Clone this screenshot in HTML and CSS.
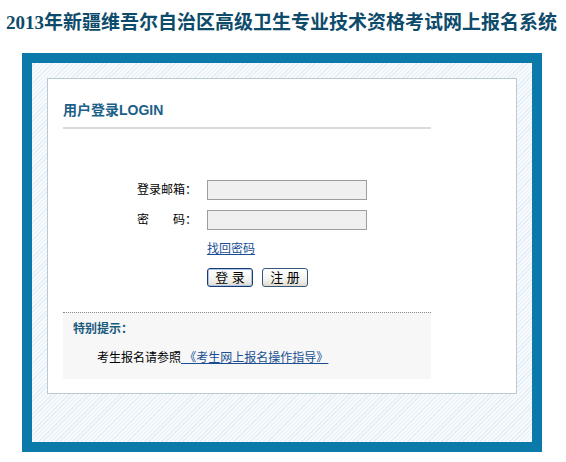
FILE: index.html
```html
<!DOCTYPE html>
<html lang="zh-CN">
  <head>
    <meta charset="utf-8">
    <title>2013年新疆维吾尔自治区高级卫生专业技术资格考试网上报名系统</title>
    <link rel="stylesheet" href="styles.css">
  </head>
  <body>
    <h1 class="site-title">2013年新疆维吾尔自治区高级卫生专业技术资格考试网上报名系统</h1>
    <div class="frame">
      <div class="panel">
        <h2 class="panel-title">用户登录LOGIN</h2>
        <form class="login-form" action="#">
          <label class="field-label" for="email">登录邮箱：</label>
          <input class="field-input" id="email" type="text">
          <label class="field-label" for="pwd"><span class="spread">密</span>码：</label>
          <input class="field-input" id="pwd" type="password">
          <div class="field-extra"><a href="#">找回密码</a></div>
          <div class="field-buttons">
            <button type="button" class="btn btn-default">登 录</button>
            <button type="button" class="btn">注 册</button>
          </div>
        </form>
        <div class="notice">
          <h3 class="notice-title">特别提示：</h3>
          <p class="notice-text">考生报名请参照<a href="#">&nbsp;《考生网上报名操作指导》</a></p>
        </div>
      </div>
    </div>
  </body>
</html>
```

FILE: styles.css
```css
body {
  margin: 0;
  font-family: 'Liberation Sans', 'Noto Sans CJK SC', sans-serif;
  font-size: 12px;
  color: #000;
  background-color: #fff;
}

a {
  color: #1a4f93;
  text-decoration: underline;
}

.site-title {
  margin: 0;
  padding: 11px 0 0 6px;
  height: 42px;
  font-family: 'Liberation Serif', 'Noto Sans CJK SC', serif;
  font-size: 19px;
  line-height: 24px;
  font-weight: bold;
  color: #0e4b6b;
  white-space: nowrap;
}

/* blue outer frame with the striped background */
.frame {
  margin-left: 22px;
  width: 470px;
  padding: 15px 15px 48px 15px;
  border: 10px solid #0b7aab;
  background-color: #f7fafd;
  background-image: repeating-linear-gradient(135deg, #f7fafd 0, #f7fafd 2px, #e5eef6 2px, #e5eef6 3px);
}

.panel {
  background-color: #fff;
  border: 1px solid #b7cad6;
  padding: 0 15px 14px 15px;
}

.panel-title {
  width: 368px;
  margin: 0;
  padding: 21px 0 7px 0;
  font-size: 14px;
  line-height: 20px;
  font-weight: bold;
  color: #1b6088;
  border-bottom: 2px solid #dadada;
}

.login-form {
  display: grid;
  grid-template-columns: 60px 160px;
  grid-template-rows: 20px 20px 18px 19px;
  column-gap: 10px;
  row-gap: 10px;
  margin: 51px 0 0 74px;
}

.field-label {
  text-align: right;
  line-height: 20px;
  color: #000;
  white-space: nowrap;
}

.spread {
  display: inline-block;
  width: 36px;
  text-align: left;
}

.field-input {
  box-sizing: border-box;
  width: 160px;
  height: 20px;
  margin: 0;
  padding: 0 3px;
  border: 1px solid #9d9d9d;
  background-color: #f0f0f0;
}

.field-extra {
  grid-column: 2;
  line-height: 18px;
}

.field-buttons {
  grid-column: 2;
  display: flex;
  gap: 9px;
}

.btn {
  box-sizing: border-box;
  width: 46px;
  height: 19px;
  padding: 0;
  font-family: 'Liberation Sans', 'Noto Sans CJK SC', sans-serif;
  font-size: 13px;
  line-height: 17px;
  color: #000;
  border: 1px solid #37577a;
  border-radius: 3px;
  background: linear-gradient(#ffffff, #f3f3ee 60%, #dedbd0);
}

.btn-default {
  border-color: #1a3c6d;
  box-shadow: inset 0 0 0 1px #a9c4ea;
}

.notice {
  width: 368px;
  height: 66px;
  margin-top: 25px;
  border-top: 1px dotted #8a8a8a;
  background-color: #f7f7f7;
}

.notice-title {
  margin: 0;
  padding: 8px 0 0 10px;
  font-size: 12px;
  line-height: 16px;
  font-weight: bold;
  color: #1a5a7c;
}

.notice-text {
  margin: 13px 0 0 34px;
  line-height: 16px;
}
```
